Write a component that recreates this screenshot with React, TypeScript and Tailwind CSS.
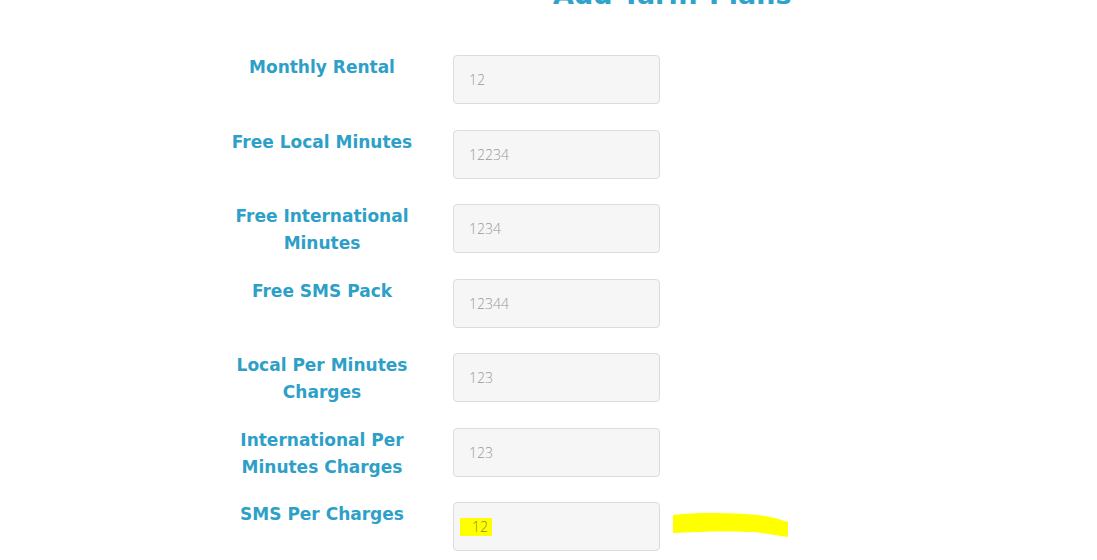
import React from "react";

type Field = { label: string[]; value: string };

const fields: Field[] = [
  { label: ["Monthly Rental"], value: "12" },
  { label: ["Free Local Minutes"], value: "12234" },
  { label: ["Free International", "Minutes"], value: "1234" },
  { label: ["Free SMS Pack"], value: "12344" },
  { label: ["Local Per Minutes", "Charges"], value: "123" },
  { label: ["International Per", "Minutes Charges"], value: "123" },
];

export default function App() {
  return (
    <div className="w-[1097px] h-[560px] overflow-hidden bg-white">
      <h1 className="-mt-[22px] pl-[553px] text-[27px] leading-[34px] font-bold text-[#2fa3cb] font-['DejaVu_Sans',sans-serif]">
        Add Tariff Plans
      </h1>
      <div className="mt-[43px] flex flex-col pl-[222px]">
        {fields.map((field) => (
          <div className="flex items-start gap-[31px] h-[74.5px]" key={field.value + field.label[0]}>
            <div className="w-[200px] -mt-[1px] text-center text-[17px] leading-[27px] font-bold text-[#2e9fc7] font-['DejaVu_Sans',sans-serif]">
              {field.label.map((line) => (
                <div key={line}>{line}</div>
              ))}
            </div>
            <div className="w-[207px] h-[49px] rounded-[4px] border border-[#dcdcdc] bg-[#f6f6f6] flex items-center pl-[15px] text-[14px] text-[#999999] font-['Open_Sans',sans-serif] font-light">
              {field.value}
            </div>
          </div>
        ))}
        <div className="flex items-start gap-[31px]">
          <div className="w-[200px] -mt-[1px] text-center text-[17px] leading-[27px] font-bold text-[#2e9fc7] font-['DejaVu_Sans',sans-serif]">
            SMS Per Charges
          </div>
          <div className="w-[207px] h-[49px] rounded-[4px] border border-[#dcdcdc] bg-[#f6f6f6] flex items-center pl-[6px] text-[14px] text-[#8a8a3a] font-['Open_Sans',sans-serif] font-light">
            <span className="bg-[#ffff00] pl-[12px] pr-[4px] leading-[18px]">12</span>
          </div>
          <svg width="120" height="30" viewBox="0 0 120 30" className="mt-[9px] -ml-[18px]">
            <path
              d="M0 4 C25 1 60 2 85 4 C100 6 108 9 115 11 L115 26 C100 24 90 21 75 21 C50 20 25 21 0 22 Z"
              fill="#ffff00"
            />
          </svg>
        </div>
      </div>
    </div>
  );
}
